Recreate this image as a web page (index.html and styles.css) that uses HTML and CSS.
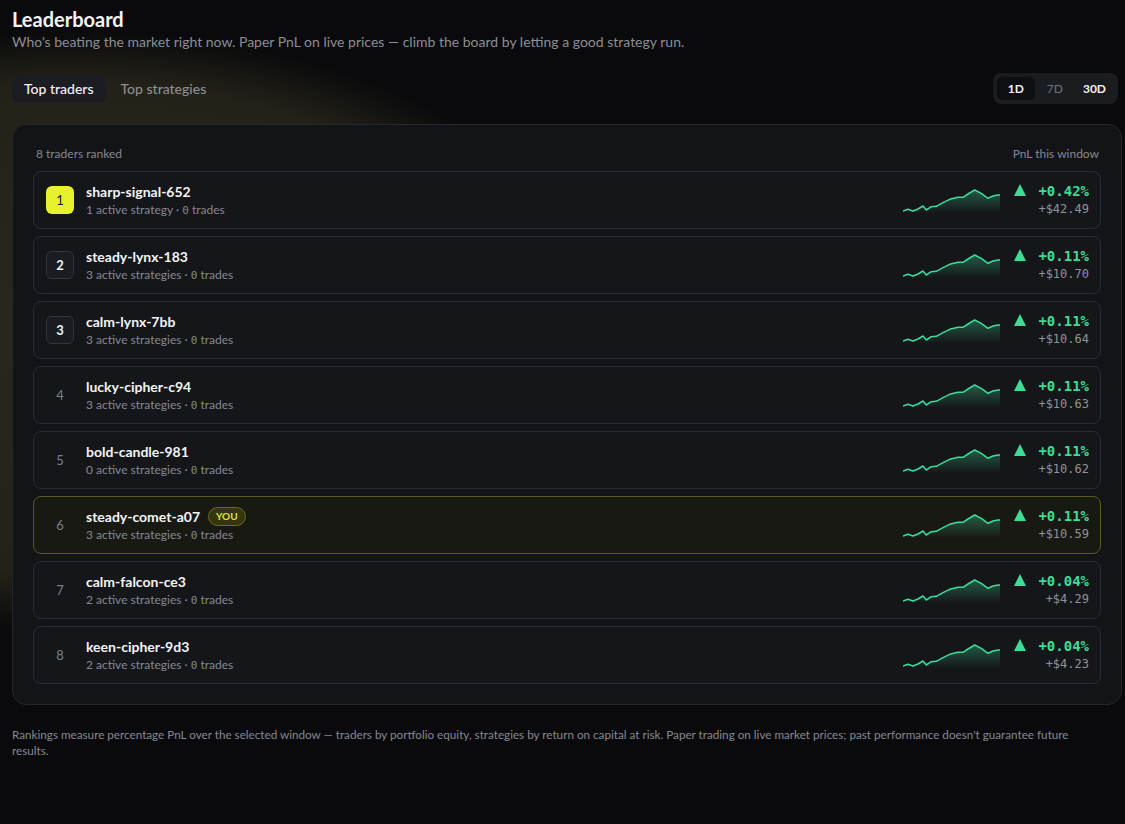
FILE: index.html
```html
<!DOCTYPE html>
<html lang="en">
<head>
  <meta charset="UTF-8">
  <meta name="viewport" content="width=device-width, initial-scale=1.0">
  <title>Leaderboard</title>
  <link rel="stylesheet" href="styles.css">
</head>
<body>
  <svg class="defs" width="0" height="0" aria-hidden="true">
    <defs>
      <linearGradient id="sparkFill" x1="0" y1="0" x2="0" y2="1">
        <stop offset="0" stop-color="#3ddc97" stop-opacity="0.35" />
        <stop offset="1" stop-color="#3ddc97" stop-opacity="0" />
      </linearGradient>
    </defs>
  </svg>

  <div class="page">
    <!-- Cabecera -->
    <header class="header">
      <h1 class="title">Leaderboard</h1>
      <p class="subtitle">Who's beating the market right now. Paper PnL on live prices — climb the board by letting a good strategy run.</p>
    </header>

    <div class="toolbar">
      <div class="tabs">
        <button class="tab active">Top traders</button>
        <button class="tab">Top strategies</button>
      </div>
      <div class="range">
        <button class="range-btn active">1D</button>
        <button class="range-btn dim">7D</button>
        <button class="range-btn last">30D</button>
      </div>
    </div>

    <!-- Tabla de ranking -->
    <section class="board">
      <div class="board-head">
        <span>8 traders ranked</span>
        <span>PnL this window</span>
      </div>

      <div class="rows">
        <div class="row">
          <div class="rank gold">1</div>
          <div class="who">
            <div class="name">sharp-signal-652</div>
            <div class="meta">1 active strategy · <span class="num">0</span> trades</div>
          </div>
          <svg class="spark" viewBox="0 0 98 30"><path class="area" d="M0 28 L5 26.3 L10 28 L15 26 L20 23 L23.3 27 L28.3 23.7 L33.3 23.3 L40 19.7 L46.7 16.3 L55 14.3 L60 14.3 L65 11 L71.7 7 L78.3 10.3 L85 15.3 L90 13 L95 12 L97 12 L97 30 L0 30 Z"/><path class="line" d="M0 28 L5 26.3 L10 28 L15 26 L20 23 L23.3 27 L28.3 23.7 L33.3 23.3 L40 19.7 L46.7 16.3 L55 14.3 L60 14.3 L65 11 L71.7 7 L78.3 10.3 L85 15.3 L90 13 L95 12 L97 12"/></svg>
          <div class="delta">
            <span class="arrow"></span>
            <div class="values">
              <div class="pct">+0.42%</div>
              <div class="usd">+$42.49</div>
            </div>
          </div>
        </div>

        <div class="row">
          <div class="rank boxed">2</div>
          <div class="who">
            <div class="name">steady-lynx-183</div>
            <div class="meta">3 active strategies · <span class="num">0</span> trades</div>
          </div>
          <svg class="spark" viewBox="0 0 98 30"><path class="area" d="M0 28 L5 26.3 L10 28 L15 26 L20 23 L23.3 27 L28.3 23.7 L33.3 23.3 L40 19.7 L46.7 16.3 L55 14.3 L60 14.3 L65 11 L71.7 7 L78.3 10.3 L85 15.3 L90 13 L95 12 L97 12 L97 30 L0 30 Z"/><path class="line" d="M0 28 L5 26.3 L10 28 L15 26 L20 23 L23.3 27 L28.3 23.7 L33.3 23.3 L40 19.7 L46.7 16.3 L55 14.3 L60 14.3 L65 11 L71.7 7 L78.3 10.3 L85 15.3 L90 13 L95 12 L97 12"/></svg>
          <div class="delta">
            <span class="arrow"></span>
            <div class="values">
              <div class="pct">+0.11%</div>
              <div class="usd">+$10.70</div>
            </div>
          </div>
        </div>

        <div class="row">
          <div class="rank boxed">3</div>
          <div class="who">
            <div class="name">calm-lynx-7bb</div>
            <div class="meta">3 active strategies · <span class="num">0</span> trades</div>
          </div>
          <svg class="spark" viewBox="0 0 98 30"><path class="area" d="M0 28 L5 26.3 L10 28 L15 26 L20 23 L23.3 27 L28.3 23.7 L33.3 23.3 L40 19.7 L46.7 16.3 L55 14.3 L60 14.3 L65 11 L71.7 7 L78.3 10.3 L85 15.3 L90 13 L95 12 L97 12 L97 30 L0 30 Z"/><path class="line" d="M0 28 L5 26.3 L10 28 L15 26 L20 23 L23.3 27 L28.3 23.7 L33.3 23.3 L40 19.7 L46.7 16.3 L55 14.3 L60 14.3 L65 11 L71.7 7 L78.3 10.3 L85 15.3 L90 13 L95 12 L97 12"/></svg>
          <div class="delta">
            <span class="arrow"></span>
            <div class="values">
              <div class="pct">+0.11%</div>
              <div class="usd">+$10.64</div>
            </div>
          </div>
        </div>

        <div class="row">
          <div class="rank">4</div>
          <div class="who">
            <div class="name">lucky-cipher-c94</div>
            <div class="meta">3 active strategies · <span class="num">0</span> trades</div>
          </div>
          <svg class="spark" viewBox="0 0 98 30"><path class="area" d="M0 28 L5 26.3 L10 28 L15 26 L20 23 L23.3 27 L28.3 23.7 L33.3 23.3 L40 19.7 L46.7 16.3 L55 14.3 L60 14.3 L65 11 L71.7 7 L78.3 10.3 L85 15.3 L90 13 L95 12 L97 12 L97 30 L0 30 Z"/><path class="line" d="M0 28 L5 26.3 L10 28 L15 26 L20 23 L23.3 27 L28.3 23.7 L33.3 23.3 L40 19.7 L46.7 16.3 L55 14.3 L60 14.3 L65 11 L71.7 7 L78.3 10.3 L85 15.3 L90 13 L95 12 L97 12"/></svg>
          <div class="delta">
            <span class="arrow"></span>
            <div class="values">
              <div class="pct">+0.11%</div>
              <div class="usd">+$10.63</div>
            </div>
          </div>
        </div>

        <div class="row">
          <div class="rank">5</div>
          <div class="who">
            <div class="name">bold-candle-981</div>
            <div class="meta">0 active strategies · <span class="num">0</span> trades</div>
          </div>
          <svg class="spark" viewBox="0 0 98 30"><path class="area" d="M0 28 L5 26.3 L10 28 L15 26 L20 23 L23.3 27 L28.3 23.7 L33.3 23.3 L40 19.7 L46.7 16.3 L55 14.3 L60 14.3 L65 11 L71.7 7 L78.3 10.3 L85 15.3 L90 13 L95 12 L97 12 L97 30 L0 30 Z"/><path class="line" d="M0 28 L5 26.3 L10 28 L15 26 L20 23 L23.3 27 L28.3 23.7 L33.3 23.3 L40 19.7 L46.7 16.3 L55 14.3 L60 14.3 L65 11 L71.7 7 L78.3 10.3 L85 15.3 L90 13 L95 12 L97 12"/></svg>
          <div class="delta">
            <span class="arrow"></span>
            <div class="values">
              <div class="pct">+0.11%</div>
              <div class="usd">+$10.62</div>
            </div>
          </div>
        </div>

        <div class="row me">
          <div class="rank">6</div>
          <div class="who">
            <div class="name">steady-comet-a07 <span class="you">YOU</span></div>
            <div class="meta">3 active strategies · <span class="num">0</span> trades</div>
          </div>
          <svg class="spark" viewBox="0 0 98 30"><path class="area" d="M0 28 L5 26.3 L10 28 L15 26 L20 23 L23.3 27 L28.3 23.7 L33.3 23.3 L40 19.7 L46.7 16.3 L55 14.3 L60 14.3 L65 11 L71.7 7 L78.3 10.3 L85 15.3 L90 13 L95 12 L97 12 L97 30 L0 30 Z"/><path class="line" d="M0 28 L5 26.3 L10 28 L15 26 L20 23 L23.3 27 L28.3 23.7 L33.3 23.3 L40 19.7 L46.7 16.3 L55 14.3 L60 14.3 L65 11 L71.7 7 L78.3 10.3 L85 15.3 L90 13 L95 12 L97 12"/></svg>
          <div class="delta">
            <span class="arrow"></span>
            <div class="values">
              <div class="pct">+0.11%</div>
              <div class="usd">+$10.59</div>
            </div>
          </div>
        </div>

        <div class="row">
          <div class="rank">7</div>
          <div class="who">
            <div class="name">calm-falcon-ce3</div>
            <div class="meta">2 active strategies · <span class="num">0</span> trades</div>
          </div>
          <svg class="spark" viewBox="0 0 98 30"><path class="area" d="M0 28 L5 26.3 L10 28 L15 26 L20 23 L23.3 27 L28.3 23.7 L33.3 23.3 L40 19.7 L46.7 16.3 L55 14.3 L60 14.3 L65 11 L71.7 7 L78.3 10.3 L85 15.3 L90 13 L95 12 L97 12 L97 30 L0 30 Z"/><path class="line" d="M0 28 L5 26.3 L10 28 L15 26 L20 23 L23.3 27 L28.3 23.7 L33.3 23.3 L40 19.7 L46.7 16.3 L55 14.3 L60 14.3 L65 11 L71.7 7 L78.3 10.3 L85 15.3 L90 13 L95 12 L97 12"/></svg>
          <div class="delta">
            <span class="arrow"></span>
            <div class="values">
              <div class="pct">+0.04%</div>
              <div class="usd">+$4.29</div>
            </div>
          </div>
        </div>

        <div class="row">
          <div class="rank">8</div>
          <div class="who">
            <div class="name">keen-cipher-9d3</div>
            <div class="meta">2 active strategies · <span class="num">0</span> trades</div>
          </div>
          <svg class="spark" viewBox="0 0 98 30"><path class="area" d="M0 28 L5 26.3 L10 28 L15 26 L20 23 L23.3 27 L28.3 23.7 L33.3 23.3 L40 19.7 L46.7 16.3 L55 14.3 L60 14.3 L65 11 L71.7 7 L78.3 10.3 L85 15.3 L90 13 L95 12 L97 12 L97 30 L0 30 Z"/><path class="line" d="M0 28 L5 26.3 L10 28 L15 26 L20 23 L23.3 27 L28.3 23.7 L33.3 23.3 L40 19.7 L46.7 16.3 L55 14.3 L60 14.3 L65 11 L71.7 7 L78.3 10.3 L85 15.3 L90 13 L95 12 L97 12"/></svg>
          <div class="delta">
            <span class="arrow"></span>
            <div class="values">
              <div class="pct">+0.04%</div>
              <div class="usd">+$4.23</div>
            </div>
          </div>
        </div>
      </div>
    </section>

    <p class="footnote">Rankings measure percentage PnL over the selected window — traders by portfolio equity, strategies by return on capital at risk. Paper trading on live market prices; past performance doesn't guarantee future results.</p>
  </div>
</body>
</html>
```

FILE: styles.css
```css
* {
  margin: 0;
  padding: 0;
  box-sizing: border-box;
}

body {
  font-family: 'Segoe UI', 'Lato', 'Noto Sans', sans-serif;
  background-color: #0a0a0c;
  background-image:
    radial-gradient(ellipse 520px 300px at 80px 330px, rgba(74, 70, 44, 0.5) 0%, rgba(70, 67, 42, 0.42) 82%, rgba(60, 57, 36, 0) 100%);
  background-repeat: no-repeat;
  color: #f1f2f4;
  height: 100vh;
  overflow: hidden;
}

.defs {
  position: absolute;
}

.page {
  padding: 6px 3px 0 12px;
}

/* Cabecera */
.title {
  font-size: 20px;
  font-weight: 700;
  line-height: 26px;
  color: #f4f4f5;
}

.subtitle {
  font-size: 14px;
  line-height: 20px;
  color: #8b8e96;
}

.toolbar {
  display: flex;
  justify-content: space-between;
  align-items: center;
  margin-top: 21px;
}

.tabs {
  display: flex;
  gap: 3px;
}

.tab {
  font-family: inherit;
  font-size: 14px;
  font-weight: 500;
  color: #8b8e96;
  background: transparent;
  border: none;
  border-radius: 7px;
  padding: 0 12px;
  height: 28px;
}

.tab.active {
  background-color: #1c1d23;
  color: #f4f4f5;
}

.range {
  display: flex;
  align-items: center;
  background-color: #1b1c20;
  border-radius: 8px;
  padding: 4px;
  margin-right: 4px;
}

.range-btn {
  font-family: inherit;
  font-size: 12px;
  font-weight: 700;
  color: #f1f2f4;
  background: transparent;
  border: none;
  border-radius: 6px;
  height: 23px;
  padding: 0 11px;
}

.range-btn.active {
  background-color: #0e0f12;
}

.range-btn.dim {
  color: #6c6f77;
  font-weight: 500;
  padding: 0 12px;
}

.range-btn.last {
  padding: 0 8px;
}

/* Tarjeta principal */
.board {
  margin-top: 20px;
  background-color: #131418;
  border: 1px solid #25272c;
  border-radius: 14px;
  padding: 20px;
}

.board-head {
  display: flex;
  justify-content: space-between;
  font-size: 12px;
  line-height: 17px;
  color: #858891;
  padding: 0 2px 0 3px;
  margin-bottom: 9px;
}

.rows {
  display: flex;
  flex-direction: column;
  gap: 7px;
}

.row {
  display: flex;
  align-items: center;
  height: 58px;
  padding: 0 11px 0 12px;
  background-color: #15161a;
  border: 1px solid #2a2c31;
  border-radius: 8px;
}

.row.me {
  background-color: #191914;
  border-color: #5a5a20;
}

.rank {
  width: 28px;
  height: 28px;
  display: flex;
  align-items: center;
  justify-content: center;
  font-size: 13px;
  color: #7c7f87;
  border-radius: 6px;
  margin-right: 12px;
  flex-shrink: 0;
}

.rank.gold {
  background-color: #e8f22c;
  color: #1a1a12;
}

.rank.boxed {
  background-color: #1b1c21;
  border: 1px solid #33353b;
  color: #f1f2f4;
  font-weight: 700;
}

.who {
  flex: 1;
  min-width: 0;
}

.name {
  display: flex;
  align-items: center;
  gap: 8px;
  font-size: 14px;
  font-weight: 700;
  line-height: 19px;
  color: #f3f4f6;
}

.you {
  font-size: 10px;
  font-weight: 700;
  color: #dde63a;
  background-color: #35360f;
  border: 1px solid #6a6c1e;
  border-radius: 10px;
  padding: 0 7px;
  line-height: 17px;
}

.meta {
  font-size: 12px;
  line-height: 17px;
  color: #858891;
}

.num {
  font-family: 'DejaVu Sans Mono', monospace;
  font-size: 11px;
}

/* Mini gráfico */
.spark {
  width: 98px;
  height: 30px;
  margin-right: 13px;
  align-self: flex-start;
  margin-top: 11px;
  flex-shrink: 0;
}

.spark .area {
  fill: url(#sparkFill);
}

.spark .line {
  fill: none;
  stroke: #3ddc97;
  stroke-width: 1.5;
  stroke-linejoin: round;
}

.delta {
  display: flex;
  align-items: flex-start;
  width: 75px;
  flex-shrink: 0;
}

.arrow {
  width: 0;
  height: 0;
  border-left: 6.5px solid transparent;
  border-right: 6.5px solid transparent;
  border-bottom: 12px solid #3ddc97;
  margin-top: 2px;
}

.values {
  flex: 1;
  text-align: right;
  font-family: 'DejaVu Sans Mono', 'Liberation Mono', monospace;
}

.pct {
  font-size: 14px;
  font-weight: 700;
  line-height: 19px;
  color: #3ddc97;
}

.usd {
  font-size: 12px;
  line-height: 17px;
  color: #8f929a;
}

.footnote {
  max-width: 1075px;
  margin-top: 21px;
  font-size: 11.7px;
  line-height: 16px;
  color: #858891;
}
```
